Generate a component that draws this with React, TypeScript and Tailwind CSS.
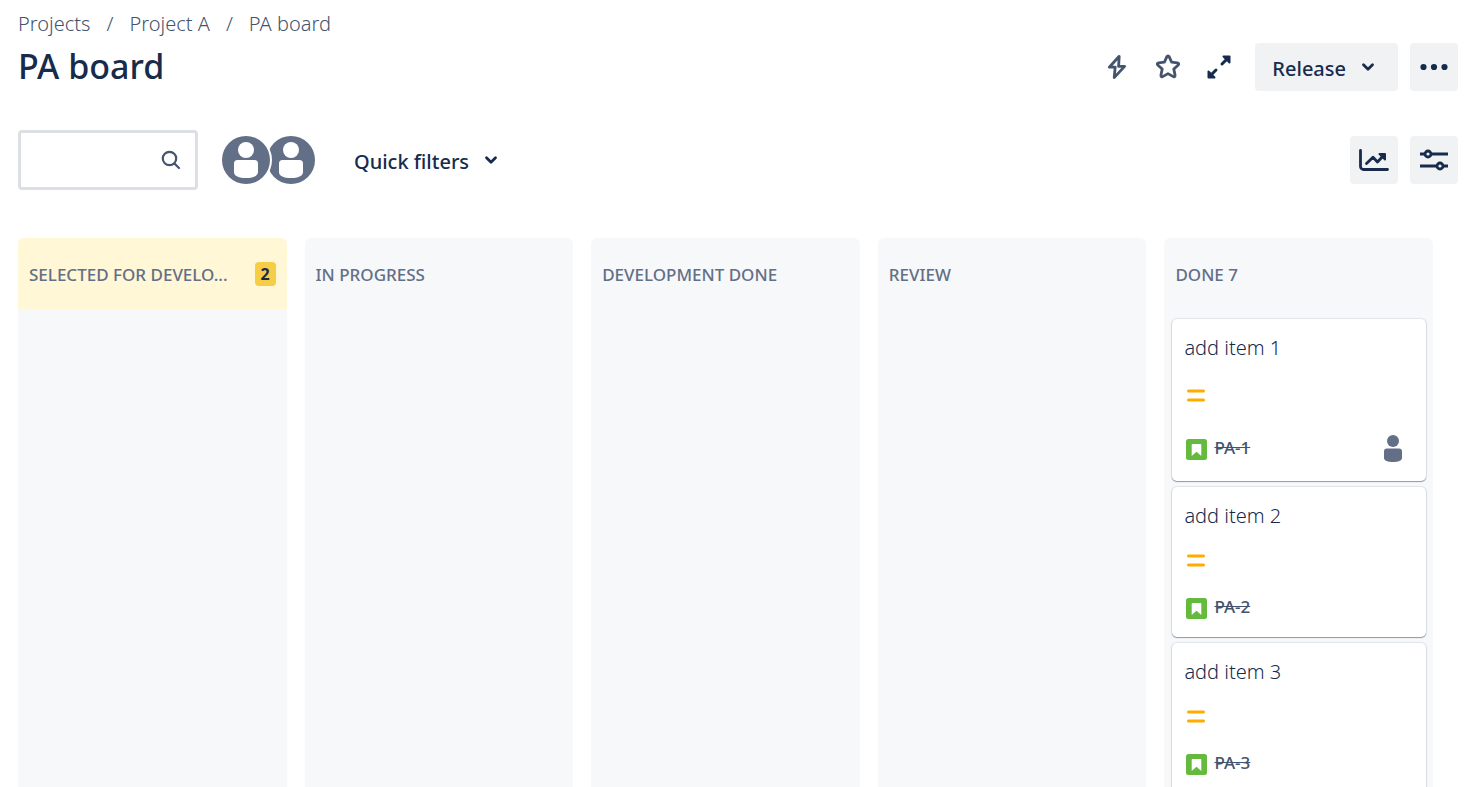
import type { ReactNode } from "react";

type Card = { id: string; title: string; assigned?: boolean };
type Column = { name: string; limit?: number; cards?: Card[] };

const columns: Column[] = [
  { name: "Selected for develo...", limit: 2 },
  { name: "In progress" },
  { name: "Development done" },
  { name: "Review" },
  {
    name: "Done 7",
    cards: [
      { id: "PA-1", title: "add item 1", assigned: true },
      { id: "PA-2", title: "add item 2" },
      { id: "PA-3", title: "add item 3" },
    ],
  },
];

function Chevron() {
  return (
    <svg width="14" height="10" viewBox="0 0 14 10" fill="none" stroke="currentColor" strokeWidth="2.8" strokeLinecap="round" strokeLinejoin="round" aria-hidden="true">
      <path d="M2.500 2.800 7 7.300l4.500-4.500" />
    </svg>
  );
}

function IconButton({ label, filled, children }: { label: string; filled?: boolean; children: ReactNode }) {
  return (
    <button
      type="button"
      aria-label={label}
      className={
        filled
          ? "flex size-12 items-center justify-center rounded bg-[#f1f2f4] text-[#172b4d]"
          : "flex size-12 items-center justify-center rounded text-[#44546f]"
      }
    >
      {children}
    </button>
  );
}

function Avatar({ label }: { label: string }) {
  return (
    <button type="button" aria-label={label} className="relative size-[52px] rounded-full bg-white p-[2px] first:z-10 not-first:-ml-[7px]">
      <svg width="48" height="48" viewBox="0 0 48 48" fill="#fff" aria-hidden="true">
        <circle cx="24" cy="24" r="24" fill="#626f86" />
        <circle cx="24" cy="14" r="8" />
        <path d="M12 27.500a3.500 3.500 0 0 1 3.500-3.500h17a3.500 3.500 0 0 1 3.500 3.500V36c0 4-5 6-12 6s-12-2-12-6z" />
      </svg>
    </button>
  );
}

function IssueCard({ card }: { card: Card }) {
  const row = card.assigned ? "h-[42px]" : "h-[36px]";
  return (
    <article className="rounded-[5px] bg-white px-3 pt-[14px] pb-[11px] shadow-[0_1px_1px_#091e4260,0_0_1px_1px_#091e4218]">
      <h3 className="text-[20px] leading-[30px] font-light text-[#172b4d]">{card.title}</h3>
      <div className={`mt-[11px] flex items-center pl-[3px] ${row}`}>
        <svg width="18" height="13" viewBox="0 0 18 13" stroke="#ffab00" strokeWidth="3" strokeLinecap="round" role="img" aria-label="Medium priority">
          <path d="M1.500 2h15M1.500 11h15" />
        </svg>
      </div>
      <div className={`mt-3 flex items-center justify-between pr-3 pl-[2px] ${row}`}>
        <div className="flex items-center gap-[7px]">
          <svg width="21" height="21" viewBox="0 0 21 21" role="img" aria-label="Story">
            <rect width="21" height="21" rx="2.500" fill="#63ba3c" />
            <path d="M6.500 5h8a.8.800 0 0 1 .800.800V17l-4.800-4.200L5.700 17V5.800a.8.800 0 0 1 .800-.800z" fill="#fff" />
          </svg>
          <a href="#" className="pb-[3px] text-[17px] leading-6 font-medium text-[#44546f] line-through">
            {card.id}
          </a>
        </div>
        {card.assigned && (
          <svg width="18" height="28" viewBox="0 0 18 28" fill="#626f86" role="img" aria-label="Assignee">
            <circle cx="9" cy="6" r="6" />
            <path d="M0 16.500a3 3 0 0 1 3-3h12a3 3 0 0 1 3 3V23c0 2.700-4 4-9 4s-9-1.300-9-4z" />
          </svg>
        )}
      </div>
    </article>
  );
}

function BoardColumn({ column }: { column: Column }) {
  return (
    <section className="min-w-0 overflow-hidden rounded-t-[6px] bg-[#f7f8fa]">
      <header
        className={
          column.limit
            ? "flex h-[71px] items-center justify-between gap-2 bg-[#fff7d6] px-[11px]"
            : "flex h-[71px] items-center px-[11px]"
        }
      >
        <h2 className="truncate pt-[2px] text-[17px] leading-6 font-medium text-[#626f86] uppercase">{column.name}</h2>
        {column.limit && (
          <span className="flex h-6 w-[21px] shrink-0 items-center justify-center rounded-[4px] bg-[#f5cd47] text-[16px] leading-6 font-bold text-[#172b4d]">
            {column.limit}
          </span>
        )}
      </header>
      {column.cards && (
        <div className="flex flex-col gap-[6px] px-[7px] pt-[10px] pl-2">
          {column.cards.map((card) => (
            <IssueCard key={card.id} card={card} />
          ))}
        </div>
      )}
    </section>
  );
}

export default function App() {
  return (
    <main className="flex h-screen flex-col overflow-hidden bg-white pl-[18px] font-['Noto_Sans',sans-serif] text-[#172b4d]">
      <nav aria-label="Breadcrumb" className="pt-[9px] text-[20px] leading-[30px] font-light text-[#44546f]">
        <ol className="flex gap-4">
          <li><a href="#">Projects</a></li>
          <li aria-hidden="true">/</li>
          <li><a href="#">Project A</a></li>
          <li aria-hidden="true">/</li>
          <li><a href="#">PA board</a></li>
        </ol>
      </nav>

      <div className="mt-1 flex items-start justify-between pr-[25px]">
        <h1 className="text-[34px] leading-[46px] font-medium">PA board</h1>
        <div className="flex items-center gap-3">
          <div className="flex items-center gap-[3px]">
            <IconButton label="Automation">
              <svg width="24" height="28" viewBox="0 0 24 28" fill="none" stroke="currentColor" strokeWidth="2.800" strokeLinejoin="round" aria-hidden="true">
                <path d="M14.200 3.300 4.300 14.200h5.900L9.200 24.600 19.600 13.400h-6z" />
              </svg>
            </IconButton>
            <IconButton label="Star board">
              <svg width="28" height="28" viewBox="0 0 28 28" fill="none" stroke="currentColor" strokeWidth="2.800" strokeLinejoin="round" aria-hidden="true">
                <path d="M12.900 3.600a1.200 1.200 0 0 1 2.200 0l2.500 5.500 6 .700a1.200 1.200 0 0 1 .700 2.100l-4.500 4.200 1.300 6.200a1.200 1.200 0 0 1-1.800 1.300L14 20.600l-5.300 3a1.200 1.200 0 0 1-1.800-1.300l1.300-6.200-4.500-4.200a1.200 1.200 0 0 1 .700-2.100l6-.700z" />
              </svg>
            </IconButton>
            <IconButton label="Full screen">
              <svg width="26" height="26" viewBox="0 0 26 26" fill="none" stroke="#172b4d" strokeWidth="3" strokeLinecap="round" strokeLinejoin="round" aria-hidden="true">
                <path d="m16 10 6.500-6.500M10 16l-6.500 6.500" />
                <path d="M17.500 2.500h6v6zM2.500 17.500v6h6z" fill="#172b4d" strokeWidth="2" />
              </svg>
            </IconButton>
          </div>
          <button type="button" className="flex h-12 items-center gap-3 rounded bg-[#f1f2f4] pr-5 pl-[17px] text-[20px] leading-[30px] font-medium">
            <span className="pt-[3px]">Release</span>
            <span className="flex w-5 justify-center"><Chevron /></span>
          </button>
          <IconButton label="More actions" filled>
            <svg width="28" height="8" viewBox="0 0 28 8" fill="currentColor" aria-hidden="true">
              <circle cx="3.500" cy="4" r="3.100" />
              <circle cx="14" cy="4" r="3.100" />
              <circle cx="24.500" cy="4" r="3.100" />
            </svg>
          </IconButton>
        </div>
      </div>

      <div className="mt-[39px] flex items-center justify-between pr-[25px]">
        <div className="flex items-center">
          <label className="flex h-[60px] w-[180px] items-center rounded-[4px] border-3 border-[#dcdfe4] pr-[14px] pl-2 text-[#44546f]">
            <input type="search" aria-label="Search board" className="min-w-0 flex-1 bg-transparent text-[20px] outline-none" />
            <svg width="20" height="20" viewBox="0 0 20 20" fill="none" stroke="currentColor" strokeWidth="2.200" strokeLinecap="round" aria-hidden="true">
              <circle cx="8.500" cy="8.500" r="6.700" />
              <path d="m13.500 13.500 4.500 4.500" />
            </svg>
          </label>
          <div className="ml-[22px] flex">
            <Avatar label="First member" />
            <Avatar label="Second member" />
          </div>
          <button type="button" className="ml-[37px] flex items-center gap-3 text-[20px] leading-[30px] font-medium">
            <span className="pt-[3px]">Quick filters</span>
            <span className="flex w-5 justify-center"><Chevron /></span>
          </button>
        </div>
        <div className="flex gap-3">
          <IconButton label="Insights" filled>
            <svg width="30" height="24" viewBox="0 0 30 24" fill="none" stroke="currentColor" strokeWidth="2.800" strokeLinecap="round" strokeLinejoin="round" aria-hidden="true">
              <path d="M1.500 2.500v16a3 3 0 0 0 3 3h24" />
              <path d="m7.500 15.500 6.500-6.300 4.500 4.800 6.500-7" />
              <path d="M20.500 6h5.500v5.500z" fill="currentColor" strokeWidth="2" />
            </svg>
          </IconButton>
          <IconButton label="View settings" filled>
            <svg width="28" height="22" viewBox="0 0 28 22" fill="none" stroke="currentColor" strokeWidth="2.800" aria-hidden="true">
              <path d="M0 5h4.500M11.500 5H28M0 17h16.500M23.500 17H28" />
              <circle cx="8" cy="5" r="3" />
              <circle cx="20" cy="17" r="3" />
            </svg>
          </IconButton>
        </div>
      </div>

      <div className="mt-12 grid min-h-0 flex-1 grid-cols-5 gap-[18px] overflow-hidden pr-[50px]">
        {columns.map((column) => (
          <BoardColumn key={column.name} column={column} />
        ))}
      </div>
    </main>
  );
}
